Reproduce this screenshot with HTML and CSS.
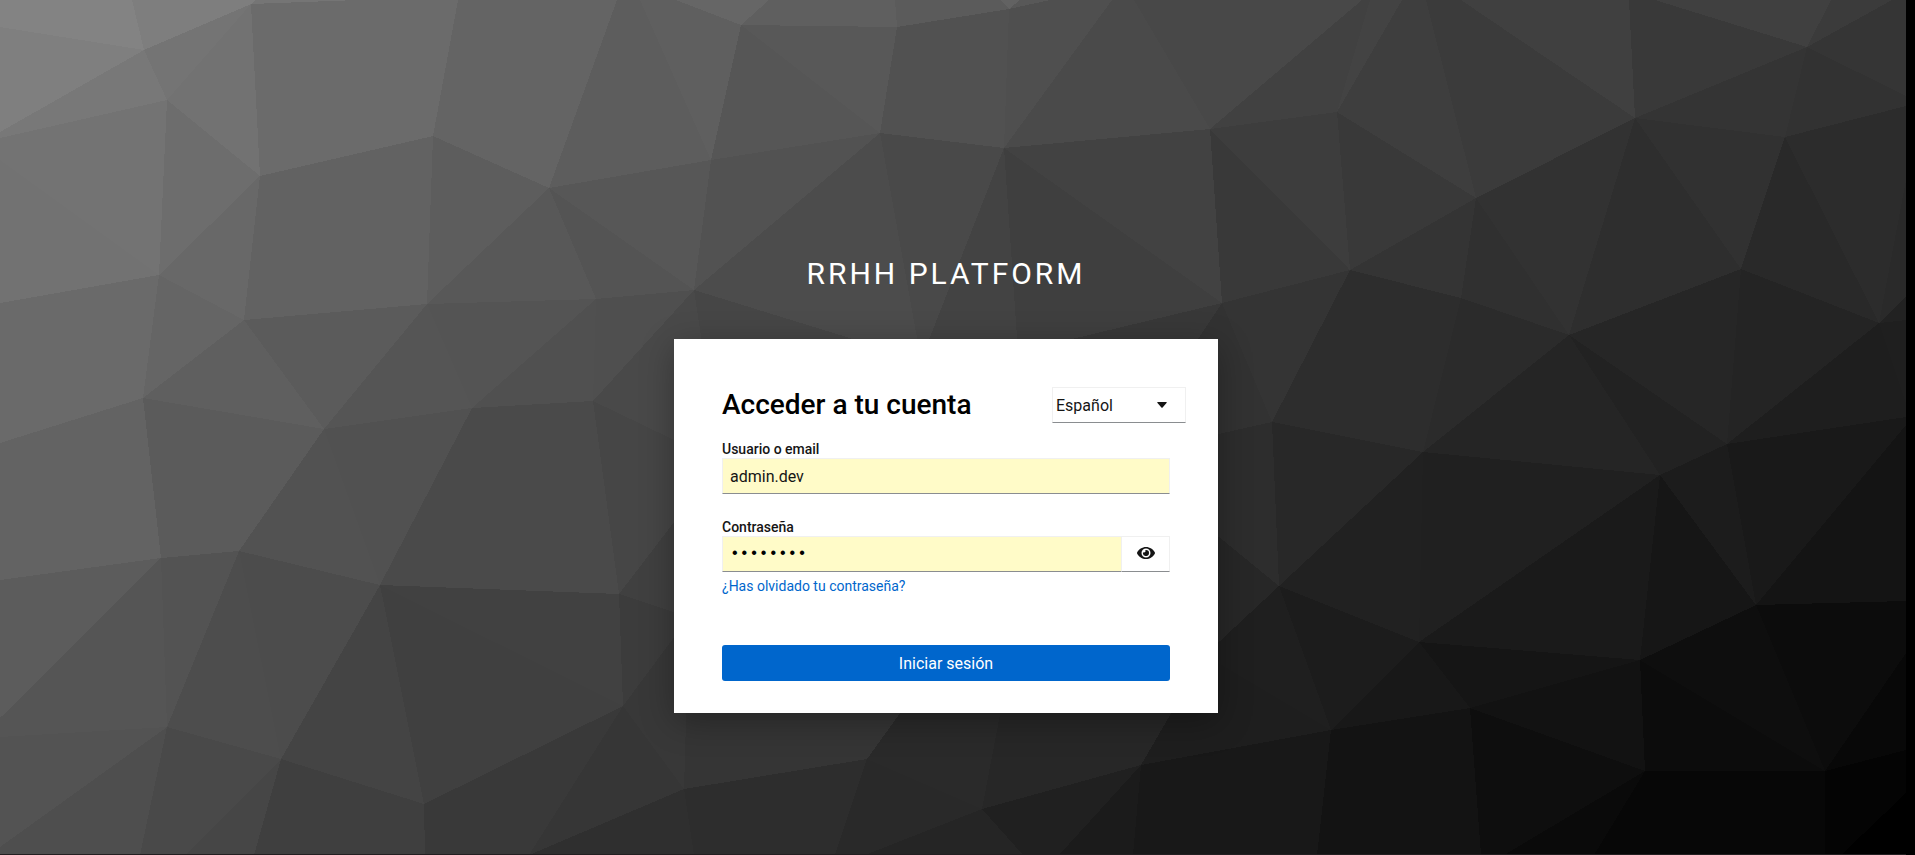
FILE: index.html
```html
<!DOCTYPE html>
<html lang="es">
<head>
    <meta charset="UTF-8">
    <meta name="viewport" content="width=device-width, initial-scale=1.0">
    <title>Acceder a RRHH Platform</title>
    <link rel="stylesheet" href="styles.css">
</head>
<body>
    <div class="login-page">
        <!-- Low-poly background -->
        <svg class="background" viewBox="0 0 1906 855" preserveAspectRatio="xMidYMin slice" shape-rendering="crispEdges" aria-hidden="true">
            <rect width="1906" height="855" fill="#2d2d2d"/>
            <polygon fill="#838383" points="0,0 132,0 144,50 0,27"/>
            <polygon fill="#7e7e7e" points="132,0 256,0 251,4 144,50"/>
            <polygon fill="#7f7f7f" points="0,27 144,50 0,132"/>
            <polygon fill="#787878" points="0,132 144,50 167,100 0,138"/>
            <polygon fill="#747474" points="144,50 251,4 167,100"/>
            <polygon fill="#727272" points="251,4 260,176 167,100"/>
            <polygon fill="#737373" points="0,138 167,100 159,275 0,160"/>
            <polygon fill="#727272" points="0,160 159,275 0,303"/>
            <polygon fill="#6d6d6d" points="167,100 260,176 159,275"/>
            <polygon fill="#6b6b6b" points="251,4 359,0 458,0 433,136 260,176"/>
            <polygon fill="#757575" points="256,0 359,0 251,4"/>
            <polygon fill="#646464" points="458,0 617,0 549,188 433,136"/>
            <polygon fill="#5d5d5d" points="617,0 640,0 711,160 549,188"/>
            <polygon fill="#5f5f5f" points="640,0 676,0 741,25 711,160"/>
            <polygon fill="#666666" points="676,0 769,0 741,25"/>
            <polygon fill="#5f5f5f" points="769,0 895,0 897,27 741,25"/>
            <polygon fill="#5b5b5b" points="895,0 1000,0 1009,9 897,27"/>
            <polygon fill="#626262" points="1000,0 1020,0 1009,9"/>
            <polygon fill="#585858" points="1020,0 1050,0 1009,9"/>
            <polygon fill="#585858" points="741,25 897,27 880,133"/>
            <polygon fill="#565656" points="741,25 880,133 711,160"/>
            <polygon fill="#515151" points="897,27 1009,9 1004,148 880,133"/>
            <polygon fill="#4f4f4f" points="1009,9 1050,0 1112,0 1004,148"/>
            <polygon fill="#4a4a4a" points="1112,0 1134,0 1210,129 1004,148"/>
            <polygon fill="#484848" points="1134,0 1362,0 1210,129"/>
            <polygon fill="#626262" points="260,176 433,136 427,304 244,320"/>
            <polygon fill="#5d5d5d" points="433,136 549,188 427,304"/>
            <polygon fill="#585858" points="549,188 596,299 427,304"/>
            <polygon fill="#575757" points="549,188 711,160 694,290"/>
            <polygon fill="#545454" points="549,188 694,290 596,299"/>
            <polygon fill="#525252" points="711,160 880,133 694,290"/>
            <polygon fill="#4c4c4c" points="880,133 921,360 694,290"/>
            <polygon fill="#494949" points="880,133 1004,148 921,360"/>
            <polygon fill="#434343" points="1004,148 1018,352 921,360"/>
            <polygon fill="#3f3f3f" points="1004,148 1222,303 1018,352"/>
            <polygon fill="#424242" points="1004,148 1210,129 1222,303"/>
            <polygon fill="#393939" points="1210,129 1350,270 1222,303"/>
            <polygon fill="#3d3d3d" points="1210,129 1337,112 1350,270"/>
            <polygon fill="#414141" points="1210,129 1362,0 1370,0 1337,112"/>
            <polygon fill="#434343" points="1370,0 1402,0 1337,112"/>
            <polygon fill="#3e3e3e" points="1402,0 1426,0 1476,198 1337,112"/>
            <polygon fill="#3b3b3b" points="1426,0 1461,0 1635,118 1476,198"/>
            <polygon fill="#404040" points="1461,0 1629,0 1635,118"/>
            <polygon fill="#393939" points="1629,0 1655,0 1807,47 1635,118"/>
            <polygon fill="#404040" points="1655,0 1831,0 1807,47"/>
            <polygon fill="#3b3b3b" points="1831,0 1892,0 1807,47"/>
            <polygon fill="#353535" points="1892,0 1906,0 1906,96 1807,47"/>
            <polygon fill="#323232" points="1807,47 1906,96 1906,106 1785,137"/>
            <polygon fill="#343434" points="1635,118 1807,47 1785,137"/>
            <polygon fill="#313131" points="1785,137 1741,269 1635,118"/>
            <polygon fill="#292929" points="1785,137 1879,323 1741,269"/>
            <polygon fill="#2c2c2c" points="1785,137 1906,106 1906,180 1879,323"/>
            <polygon fill="#2a2a2a" points="1906,180 1906,297 1879,323"/>
            <polygon fill="#222222" points="1906,297 1906,320 1879,323"/>
            <polygon fill="#1f1f1f" points="1879,323 1906,320 1906,403"/>
            <polygon fill="#1e1e1e" points="1879,323 1906,403 1906,417 1727,444"/>
            <polygon fill="#242424" points="1741,269 1879,323 1727,444"/>
            <polygon fill="#262626" points="1569,335 1741,269 1727,444"/>
            <polygon fill="#2e2e2e" points="1635,118 1741,269 1569,335"/>
            <polygon fill="#323232" points="1476,198 1635,118 1569,335"/>
            <polygon fill="#303030" points="1476,198 1569,335 1461,298"/>
            <polygon fill="#343434" points="1476,198 1461,298 1350,270"/>
            <polygon fill="#393939" points="1337,112 1476,198 1350,270"/>
            <polygon fill="#2d2d2d" points="1350,270 1461,298 1423,452 1272,422"/>
            <polygon fill="#2b2b2b" points="1461,298 1569,335 1423,452"/>
            <polygon fill="#252525" points="1569,335 1660,475 1423,452"/>
            <polygon fill="#222222" points="1569,335 1727,444 1660,475"/>
            <polygon fill="#343434" points="1222,303 1350,270 1272,422"/>
            <polygon fill="#323232" points="1222,303 1272,422 1120,456"/>
            <polygon fill="#383838" points="1222,303 1120,456 1018,352"/>
            <polygon fill="#2d2d2d" points="1272,422 1279,586 1120,456"/>
            <polygon fill="#272727" points="1279,586 1120,456 1205,655"/>
            <polygon fill="#282828" points="1272,422 1423,452 1279,586"/>
            <polygon fill="#212121" points="1423,452 1419,642 1279,586"/>
            <polygon fill="#202020" points="1423,452 1660,475 1419,642"/>
            <polygon fill="#1a1a1a" points="1660,475 1640,660 1419,642"/>
            <polygon fill="#161616" points="1660,475 1756,605 1640,660"/>
            <polygon fill="#1c1c1c" points="1660,475 1727,444 1756,605"/>
            <polygon fill="#191919" points="1727,444 1906,417 1906,425 1756,605"/>
            <polygon fill="#141414" points="1906,425 1906,601 1756,605"/>
            <polygon fill="#0c0c0c" points="1756,605 1906,601 1906,653 1825,771"/>
            <polygon fill="#0e0e0e" points="1756,605 1825,771 1640,660"/>
            <polygon fill="#0c0c0c" points="1640,660 1825,771 1645,771"/>
            <polygon fill="#121212" points="1640,660 1645,771 1470,708"/>
            <polygon fill="#151515" points="1419,642 1640,660 1470,708"/>
            <polygon fill="#181818" points="1419,642 1470,708 1331,730"/>
            <polygon fill="#1c1c1c" points="1279,586 1419,642 1331,730"/>
            <polygon fill="#1f1f1f" points="1279,586 1331,730 1205,655"/>
            <polygon fill="#1e1e1e" points="1205,655 1331,730 1141,765"/>
            <polygon fill="#131313" points="1331,730 1470,708 1481,855 1317,855"/>
            <polygon fill="#0e0e0e" points="1470,708 1645,771 1504,855 1481,855"/>
            <polygon fill="#0a0a0a" points="1645,771 1594,855 1504,855"/>
            <polygon fill="#070707" points="1645,771 1825,771 1825,855 1594,855"/>
            <polygon fill="#040404" points="1825,771 1906,750 1906,793 1841,855 1825,855"/>
            <polygon fill="#080808" points="1825,771 1906,653 1906,750"/>
            <polygon fill="#000000" points="1906,793 1906,855 1841,855"/>
            <polygon fill="#181818" points="1141,765 1331,730 1317,855 1133,855"/>
            <polygon fill="#1b1b1b" points="1141,765 1133,855 1059,855"/>
            <polygon fill="#202020" points="1141,765 1059,855 1023,855 982,809"/>
            <polygon fill="#252525" points="982,809 1023,855 865,855"/>
            <polygon fill="#292929" points="867,759 982,809 865,855 835,855"/>
            <polygon fill="#2d2d2d" points="684,789 867,759 835,855 694,855"/>
            <polygon fill="#2f2f2f" points="684,789 694,855 529,855"/>
            <polygon fill="#2a2a2a" points="867,759 960,630 1018,620 982,809"/>
            <polygon fill="#272727" points="982,809 1018,620 1205,655 1141,765"/>
            <polygon fill="#353535" points="684,789 689,617 960,630 867,759"/>
            <polygon fill="#363636" points="623,706 684,789 529,855"/>
            <polygon fill="#393939" points="623,706 529,855 425,855 424,804"/>
            <polygon fill="#383838" points="623,706 689,617 684,789"/>
            <polygon fill="#404040" points="380,585 623,706 424,804"/>
            <polygon fill="#414141" points="380,585 619,594 623,706"/>
            <polygon fill="#3c3c3c" points="619,594 689,617 623,706"/>
            <polygon fill="#404040" points="619,594 720,462 689,617"/>
            <polygon fill="#464646" points="694,290 921,360 720,462"/>
            <polygon fill="#494949" points="694,290 720,462 593,401"/>
            <polygon fill="#464646" points="593,401 720,462 619,594"/>
            <polygon fill="#4f4f4f" points="596,299 694,290 593,401"/>
            <polygon fill="#505050" points="472,408 596,299 593,401"/>
            <polygon fill="#545454" points="427,304 596,299 472,408"/>
            <polygon fill="#555555" points="427,304 472,408 324,429"/>
            <polygon fill="#5b5b5b" points="244,320 427,304 324,429"/>
            <polygon fill="#5f5f5f" points="244,320 324,429 143,398"/>
            <polygon fill="#656565" points="159,275 244,320 143,398"/>
            <polygon fill="#686868" points="159,275 260,176 244,320"/>
            <polygon fill="#6a6a6a" points="0,303 159,275 143,398 0,443"/>
            <polygon fill="#636363" points="0,443 143,398 161,558 0,580"/>
            <polygon fill="#5b5b5b" points="143,398 324,429 239,551 161,558"/>
            <polygon fill="#525252" points="324,429 380,585 239,551"/>
            <polygon fill="#515151" points="324,429 472,408 380,585"/>
            <polygon fill="#4a4a4a" points="472,408 593,401 619,594 380,585"/>
            <polygon fill="#5c5c5c" points="161,558 0,580 0,718"/>
            <polygon fill="#555555" points="161,558 167,727 0,737 0,718"/>
            <polygon fill="#535353" points="161,558 239,551 167,727"/>
            <polygon fill="#4d4d4d" points="239,551 281,759 167,727"/>
            <polygon fill="#4c4c4c" points="239,551 380,585 281,759"/>
            <polygon fill="#444444" points="380,585 424,804 281,759"/>
            <polygon fill="#3f3f3f" points="281,759 424,804 425,855 254,855"/>
            <polygon fill="#464646" points="281,759 254,855 185,855"/>
            <polygon fill="#494949" points="167,727 281,759 185,855 140,855"/>
            <polygon fill="#4e4e4e" points="167,727 140,855 0,855 0,847"/>
            <polygon fill="#535353" points="0,737 167,727 0,847"/>
        </svg>

        <div class="login-container">
            <header class="brand">RRHH Platform</header>

            <main class="card">
                <div class="card-header">
                    <h1>Acceder a tu cuenta</h1>
                    <div class="locale">
                        <select id="locale" aria-label="Idioma">
                            <option>Español</option>
                        </select>
                        <svg class="caret" viewBox="0 0 10 6" aria-hidden="true"><path d="M1 0h8q1.400 0 .5 1L5.600 5.500q-.6.600-1.200 0L.5 1Q-.4 0 1 0z"/></svg>
                    </div>
                </div>

                <form>
                    <div class="field">
                        <label for="username">Usuario o email</label>
                        <input type="text" id="username" value="admin.dev">
                    </div>

                    <div class="field">
                        <label for="password">Contraseña</label>
                        <div class="password-group">
                            <input type="password" id="password" value="password">
                            <button type="button" class="toggle" aria-label="Mostrar contraseña">
                                <svg viewBox="0 0 576 512" aria-hidden="true"><path d="M572.520 241.400C518.290 135.590 410.930 64 288 64S57.680 135.640 3.480 241.410a32.350 32.350 0 0 0 0 29.190C57.710 376.410 165.070 448 288 448s230.320-71.640 284.520-177.410a32.350 32.350 0 0 0 0-29.190zM288 400a144 144 0 1 1 144-144 143.930 143.930 0 0 1-144 144zm0-240a95.310 95.310 0 0 0-25.310 3.790 47.850 47.850 0 0 1-66.900 66.900A95.780 95.780 0 1 0 288 160z"/></svg>
                            </button>
                        </div>
                        <a class="forgot" href="#">¿Has olvidado tu contraseña?</a>
                    </div>

                    <button type="submit" class="submit">Iniciar sesión</button>
                </form>
            </main>
        </div>
    </div>
</body>
</html>
```
FILE: styles.css
```css
* {
    box-sizing: border-box;
}
body {
    margin: 0;
    background: #000;
    color: #151515;
    font-family: Roboto, "Noto Sans", sans-serif;
    font-size: 16px;
}
.login-page {
    display: grid;
    min-height: 100vh;
    margin-right: 9px;
    border-bottom: 1px solid #231f21;
    overflow: hidden;
}
.background {
    grid-area: 1 / 1;
    width: 100%;
    height: 100%;
    min-height: 0;
    contain: size;
}
.login-container {
    grid-area: 1 / 1;
    z-index: 1;
    padding: 256px 14px 48px 0;
}
.brand {
    margin-bottom: 47px;
    color: #fff;
    font-size: 30px;
    font-weight: 400;
    line-height: 36px;
    letter-spacing: 3px;
    text-align: center;
    text-transform: uppercase;
}
.card {
    max-width: 544px;
    margin: 0 auto;
    padding: 48px 48px 32px;
    background: #fff;
    box-shadow: 0 8px 32px rgba(0, 0, 0, 0.3);
}
.card-header {
    display: flex;
    justify-content: space-between;
    align-items: center;
    margin-right: -16px;
    margin-bottom: 17px;
}
h1 {
    margin: 0;
    color: #000;
    font-size: 28px;
    font-weight: 500;
    line-height: 36px;
}
input,
select,
.toggle {
    height: 36px;
    border: 1px solid #f0f0f0;
    border-bottom-color: #8a8d90;
    border-radius: 0;
    font-family: inherit;
    font-size: 16px;
    color: #151515;
}
.locale {
    display: grid;
    align-items: center;
    width: 134px;
}
select {
    grid-area: 1 / 1;
    appearance: none;
    width: 100%;
    padding: 0 32px 0 3px;
    background: #fff;
}
.caret {
    grid-area: 1 / 1;
    justify-self: end;
    width: 10px;
    height: 6px;
    margin-right: 19px;
    fill: #151515;
    pointer-events: none;
}
.field {
    display: flex;
    flex-direction: column;
    margin-bottom: 24px;
}
label {
    font-size: 14px;
    font-weight: 500;
    line-height: 18px;
}
input {
    width: 100%;
    padding: 0 7px;
    background: #fffbc8;
}
.password-group {
    display: flex;
}
.password-group input {
    flex: 1;
    border-right: none;
    color: #000;
    font-family: "Liberation Mono", monospace;
}
.toggle {
    display: flex;
    justify-content: center;
    align-items: center;
    width: 49px;
    padding: 0 0 2px;
    background: #fff;
    cursor: pointer;
}
.toggle svg {
    width: 18px;
    height: 16px;
    fill: #151515;
}
.forgot {
    align-self: flex-start;
    margin-top: 4px;
    color: #06c;
    font-size: 14px;
    line-height: 21px;
    text-decoration: none;
}
.submit {
    width: 100%;
    height: 36px;
    margin-top: 24px;
    border: none;
    border-radius: 3px;
    background: #06c;
    color: #fff;
    font-family: inherit;
    font-size: 16px;
    cursor: pointer;
}
.submit:hover {
    background: #004080;
}
```
